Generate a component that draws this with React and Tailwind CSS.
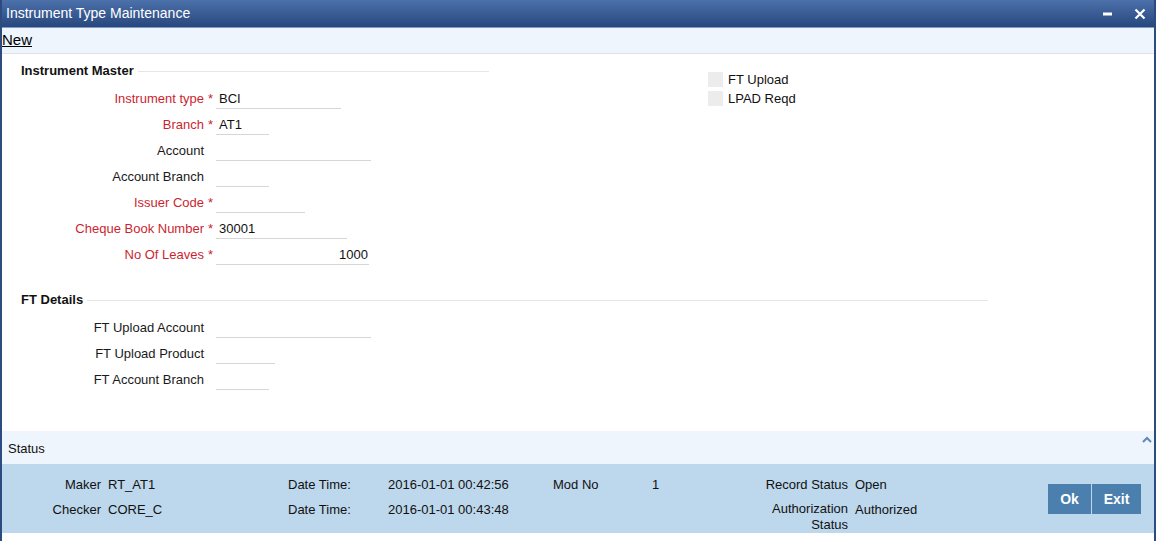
import React from 'react';

const red = 'text-[#cc1f2f]';

function Field({ label, req, width, value, right }) {
  return (
    <div className="flex items-center h-[26px]">
      <div className={`w-[202px] text-right ${req ? red : 'text-[#1a1a1a]'}`}>{label}</div>
      <div className={`w-[12px] pl-[4px] ${red}`}>{req ? '*' : ''}</div>
      <div
        className={`h-[20px] leading-[20px] border-b border-[#d6d6d6] text-[#111] ${right ? 'text-right pr-[1px]' : 'pl-[3px]'}`}
        style={{ width }}
      >
        {value}
      </div>
    </div>
  );
}

function Heading({ children, width }) {
  return (
    <div className="flex items-center h-[20px] pl-[19px] font-bold text-[#111]" style={{ width }}>
      <span>{children}</span>
      <div className="flex-1 h-px bg-[#e6e6e6] ml-[4px]" />
    </div>
  );
}

function Check({ label }) {
  return (
    <div className="flex items-center h-[19px]">
      <div className="w-[15px] h-[15px] bg-[#ececec]" />
      <span className="ml-[5px] text-[#111]">{label}</span>
    </div>
  );
}

export default function App() {
  return (
    <div className="w-[1156px] h-[541px] flex flex-col bg-white border-x-2 border-[#2c4c80] font-['Liberation_Sans',Arial,sans-serif] text-[13px] overflow-hidden">
      {/* title bar */}
      <div className="h-[28px] shrink-0 flex items-center justify-between pl-[4px] pr-[8px] bg-gradient-to-b from-[#4c71ab] to-[#28477e] border-b border-[#7f9cc6]">
        <span className="text-white text-[14px]">Instrument Type Maintenance</span>
        <div className="flex items-center gap-[21px]">
          <svg width="10" height="10" viewBox="0 0 10 10">
            <rect x="0" y="3.5" width="9" height="3" fill="#fff" />
          </svg>
          <svg width="12" height="12" viewBox="0 0 12 12">
            <path d="M1.5 1.5 L10.5 10.5 M10.5 1.5 L1.5 10.5" stroke="#fff" strokeWidth="2.2" />
          </svg>
        </div>
      </div>

      {/* toolbar */}
      <div className="h-[26px] shrink-0 flex items-center bg-[#eef5fd] border-b border-[#dde3ea]">
        <span className="text-[15px] text-black underline">New</span>
      </div>

      {/* main */}
      <div className="h-[377px] shrink-0 pt-[7px]">
        <div className="flex">
          <div className="w-[487px]">
            <Heading width="487px">Instrument Master</Heading>
            <div className="mt-[5px]">
              <Field label="Instrument type" req width="125px" value="BCI" />
              <Field label="Branch" req width="53px" value="AT1" />
              <Field label="Account" width="155px" />
              <Field label="Account Branch" width="53px" />
              <Field label="Issuer Code" req width="89px" />
              <Field label="Cheque Book Number" req width="131px" value="30001" />
              <Field label="No Of Leaves" req width="153px" value="1000" right />
            </div>
          </div>
          <div className="ml-[219px] mt-[9px]">
            <Check label="FT Upload" />
            <Check label="LPAD Reqd" />
          </div>
        </div>

        <div className="mt-[22px]">
          <Heading width="986px">FT Details</Heading>
          <div className="mt-[5px]">
            <Field label="FT Upload Account" width="155px" />
            <Field label="FT Upload Product" width="59px" />
            <Field label="FT Account Branch" width="53px" />
          </div>
        </div>
      </div>

      {/* status header */}
      <div className="h-[33px] shrink-0 flex items-center justify-between pl-[6px] pr-[2px] pt-[2px] bg-[#eef5fc]">
        <span className="text-[#111]">Status</span>
        <svg width="10" height="8" viewBox="0 0 10 8" className="-mt-[17px]">
          <path d="M1 6 L5 2 L9 6" stroke="#5f87bd" strokeWidth="2" fill="none" />
        </svg>
      </div>

      {/* status band */}
      <div className="h-[69px] shrink-0 flex pt-[8px] bg-[#bdd7ec] text-[#111]">
        <div className="flex flex-col">
          <div className="flex h-[25px] leading-[25px]">
            <div className="w-[99px] text-right">Maker</div>
            <div className="w-[187px] pl-[7px]">RT_AT1</div>
            <div className="w-[100px]">Date Time:</div>
            <div className="w-[165px]">2016-01-01 00:42:56</div>
            <div className="w-[99px]">Mod No</div>
            <div className="w-[96px]">1</div>
            <div className="w-[100px] text-right">Record Status</div>
            <div className="w-[200px] pl-[7px]">Open</div>
          </div>
          <div className="flex h-[25px] leading-[25px]">
            <div className="w-[99px] text-right">Checker</div>
            <div className="w-[187px] pl-[7px]">CORE_C</div>
            <div className="w-[100px]">Date Time:</div>
            <div className="w-[165px]">2016-01-01 00:43:48</div>
            <div className="w-[99px]" />
            <div className="w-[96px]" />
            <div className="w-[100px] text-right leading-[16px] pt-[4px]">Authorization Status</div>
            <div className="w-[200px] pl-[7px]">Authorized</div>
          </div>
        </div>
        <div className="flex mt-[12px] h-[30px] gap-px">
          <button className="w-[43px] h-[30px] bg-[#4a7fae] text-white font-bold text-[14px]">Ok</button>
          <button className="w-[49px] h-[30px] bg-[#4a7fae] text-white font-bold text-[14px]">Exit</button>
        </div>
      </div>
      <div className="flex-1 bg-white" />
    </div>
  );
}
